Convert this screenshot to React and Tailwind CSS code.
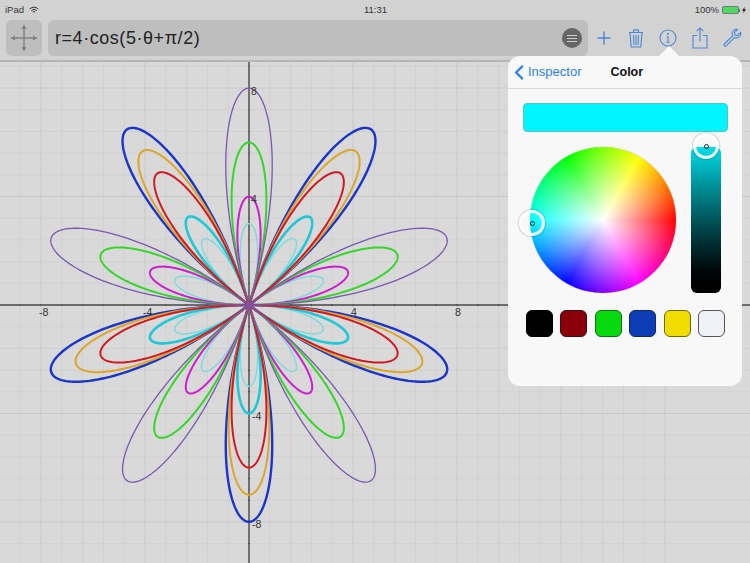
import React from 'react'

const OX = 249
const OY = 305
const SX = 26
const SY = 27.1

// r = a * sin(5t), positive a points the top petal up
const rose = (a) => {
    const pts = []
    for (let i = 0; i <= 720; i++) {
        const t = (i / 720) * Math.PI
        const r = a * Math.sin(5 * t)
        pts.push(`${(OX + r * Math.cos(t) * SX).toFixed(2)},${(OY - r * Math.sin(t) * SY).toFixed(2)}`)
    }
    return pts.join(' ')
}

const curves = [
    { a: 3, color: '#7fdadd', w: 1.5 },
    { a: -3, color: '#7fdadd', w: 1.5 },
    { a: -4, color: '#1fc8d6', w: 2.6 },
    { a: 4, color: '#cc1fcc', w: 2 },
    { a: 6, color: '#35d62a', w: 2 },
    { a: -8, color: '#1a35c8', w: 2.4 },
    { a: -7, color: '#dda52a', w: 2 },
    { a: -6, color: '#d01a22', w: 2 },
    { a: 8, color: '#7a58b0', w: 1.3 },
]

const steps = Array.from({ length: 41 }, (_, i) => i - 20)

const Graph = () => (
    <svg viewBox="0 62 750 501" className="block w-[750px] h-[501px]">
        {steps.map((k) => (
            <g key={k}>
                <line x1={OX + k * 20.8} x2={OX + k * 20.8} y1="62" y2="563" stroke={k % 5 === 0 ? '#c8c8c8' : '#d1d1d1'} strokeWidth="1" />
                <line x1="0" x2="750" y1={OY + k * 21.7} y2={OY + k * 21.7} stroke={k % 5 === 0 ? '#c8c8c8' : '#d1d1d1'} strokeWidth="1" />
                <line x1={OX + k * 20.8} x2={OX + k * 20.8} y1={OY - 1} y2={OY + 1} stroke="#444" strokeWidth="1" />
                <line x1={OX - 1} x2={OX + 1} y1={OY + k * 21.7} y2={OY + k * 21.7} stroke="#444" strokeWidth="1" />
            </g>
        ))}
        <line x1="0" x2="750" y1={OY} y2={OY} stroke="#4a4a4a" strokeWidth="1.3" />
        <line x1={OX} x2={OX} y1="62" y2="563" stroke="#4a4a4a" strokeWidth="1.4" />
        {curves.map((c) => (
            <polyline key={c.a} points={rose(c.a)} fill="none" stroke={c.color} strokeWidth={c.w} strokeLinejoin="round" />
        ))}
        <g fontFamily="'Liberation Sans', sans-serif" fontSize="10.5" fill="#333">
            <text x="39" y="316">-8</text>
            <text x="143" y="316">-4</text>
            <text x="351" y="316">4</text>
            <text x="455" y="316">8</text>
            <text x="251" y="95">8</text>
            <text x="251" y="203">4</text>
            <text x="252" y="420">-4</text>
            <text x="252" y="528">-8</text>
        </g>
    </svg>
)

const MoveIcon = () => (
    <svg viewBox="0 0 30 30" className="w-[30px] h-[30px]" fill="#808080" stroke="#808080">
        <line x1="15" y1="4" x2="15" y2="26" strokeWidth="1.4" />
        <line x1="4" y1="15" x2="26" y2="15" strokeWidth="1.4" />
        <path d="M15 1.5 L17.5 6 H12.5 Z M15 28.5 L17.5 24 H12.5 Z M1.5 15 L6 12.5 V17.5 Z M28.5 15 L24 12.5 V17.5 Z" stroke="none" />
    </svg>
)

const icon = 'w-6 h-6 fill-none stroke-[#4a88d4]'

const ToolIcons = () => (
    <div className="flex items-center gap-2 -ml-[2px]">
        <svg viewBox="0 0 24 24" className={icon} strokeWidth="1.4">
            <path d="M12 5.5V18.5M5.5 12H18.5" />
        </svg>
        <svg viewBox="0 0 24 24" className={icon} strokeWidth="1.1">
            <path d="M5 6.5H19M9.5 6V4.2Q12 3 14.5 4.2V6M6 7L7.2 21H16.8L18 7M9.5 9L9.9 19M12 9V19M14.5 9L14.1 19" />
        </svg>
        <svg viewBox="0 0 24 24" className={icon} strokeWidth="1.1">
            <circle cx="12" cy="12" r="8" />
            <path d="M12 10.5V16.5M10.6 16.5H13.4M10.8 10.5H12" />
            <circle cx="12" cy="7.8" r="0.5" fill="#4a88d4" />
        </svg>
        <svg viewBox="0 0 24 24" className={icon} strokeWidth="1.1">
            <path d="M9 9.5H5V22H19V9.5H15M12 15.5V2M8.7 5.2L12 2L15.3 5.2" />
        </svg>
        <svg viewBox="0 0 24 24" className={icon} strokeWidth="1.1">
            <path d="M20.5 6.5L17.4 9.6L15 9L14.4 6.6L17.5 3.5C14.5 2.8 11.8 5 12.2 8.4L12.6 9.8L4.4 18C3.3 19.2 4.8 21 6.2 19.9L14.4 11.6C18.2 12.7 21.7 10.2 20.5 6.5Z" />
        </svg>
    </div>
)

const Handle = ({ className }) => (
    <div className={`absolute w-[26px] h-[26px] rounded-full border-[3.5px] border-white/90 shadow-[0_0_2px_rgba(0,0,0,0.5)] flex items-center justify-center ${className}`}>
        <div className="w-[5px] h-[5px] rounded-full border border-[#123]"></div>
    </div>
)

const swatches = [
    'bg-black border-black',
    'bg-[#8a0008] border-[#3c1014]',
    'bg-[#06d90e] border-[#1c6a1e]',
    'bg-[#0c3db4] border-[#0f2a70]',
    'bg-[#f0dd00] border-[#6e6718]',
    'bg-[#f0f2f8] border-[#555]',
]

const Inspector = () => (
    <div className="absolute left-[508px] top-[56px] w-[234px] h-[330px] rounded-xl bg-[#f8f8f8]">
        <div className="absolute left-[154px] -top-[7px] w-[14px] h-[14px] rotate-45 bg-[#f8f8f8]"></div>
        <div className="relative flex items-center h-[33px] border-b border-[#d8d8d8]">
            <svg viewBox="0 0 12 18" className="ml-[5px] w-[12px] h-[17px] fill-none stroke-[#2f80ed]" strokeWidth="2.4">
                <path d="M10 2L3 9L10 16" />
            </svg>
            <span className="ml-[3px] text-[13px] text-[#2f80ed]">Inspector</span>
            <span className="ml-[29px] text-[12.5px] font-bold text-[#111]">Color</span>
        </div>
        <div className="mt-[14px] ml-[15px] w-[205px] h-[29px] rounded bg-[#00f5ff] border border-[#5cc0c8]"></div>
        <div className="relative flex mt-[15px] ml-[22px]">
            <div className="w-[146px] h-[146px] rounded-full shadow-[0_0_1px_rgba(80,80,40,0.7)] [background:radial-gradient(closest-side,#ffffff,#ffffff00),conic-gradient(from_90deg,#ff0000,#ff00ff_60deg,#0000ff_120deg,#00ffff_180deg,#00ff00_240deg,#ffff00_300deg,#ff0000)]"></div>
            <div className="ml-[15px] w-[30px] h-[146px] rounded-md bg-gradient-to-b from-[#00dde8] to-black"></div>
            <Handle className="-left-[11px] top-[63px]" />
            <Handle className="left-[163px] -top-[14px]" />
        </div>
        <div className="flex gap-[7.4px] mt-[17px] ml-[18px]">
            {swatches.map((s) => (
                <div key={s} className={`w-[27px] h-[27px] rounded-md border ${s}`}></div>
            ))}
        </div>
    </div>
)

const App = () => {
    return (
        <div className="relative flex flex-col w-[750px] h-[563px] overflow-hidden bg-[#d9d9d9] font-['Liberation_Sans',sans-serif] text-[#222]">
            {/* status bar */}
            <div className="flex items-center justify-between h-5 pl-[5px] pr-1 bg-[#d2d2d2] text-[9.5px] text-[#333]">
                <div className="flex items-center gap-[5px] w-[200px]">
                    <span>iPad</span>
                    <svg viewBox="0 0 14 10" className="w-[10px] h-[8px] fill-none stroke-[#333]" strokeWidth="1.4">
                        <path d="M1 3.5Q7 -1.5 13 3.5M3.2 5.7Q7 2.5 10.8 5.7M5.4 7.8Q7 6.6 8.6 7.8" />
                    </svg>
                </div>
                <span>11:31</span>
                <div className="flex items-center justify-end w-[200px]">
                    <span className="mr-[3px]">100%</span>
                    <div className="w-[17px] h-[8px] rounded-[2px] bg-[#4cd964] border border-[#777]"></div>
                    <div className="w-px h-[3px] bg-[#666] mr-[2px]"></div>
                    <svg viewBox="0 0 6 10" className="w-[4px] h-[8px] fill-[#222]">
                        <path d="M4 0L0 6H2.5L2 10L6 4H3.5Z" />
                    </svg>
                </div>
            </div>
            {/* toolbar */}
            <div className="flex items-start gap-[6px] h-[42px] pl-[6px] bg-[#d2d2d2] border-b-2 border-[#b4b4b4]">
                <div className="flex items-center justify-center w-9 h-9 rounded-md bg-[#bebebe]">
                    <MoveIcon />
                </div>
                <div className="flex items-center justify-between w-[540px] h-9 pl-[7px] pr-[6px] rounded-md bg-[#bebebe]">
                    <span className="text-[18px] tracking-[0.55px] text-[#222]">r=4·cos(5·θ+π/2)</span>
                    <div className="flex flex-col items-center justify-center gap-[2px] w-5 h-5 rounded-full bg-[#666]">
                        <div className="w-[10px] h-px bg-[#ccc]"></div>
                        <div className="w-[10px] h-px bg-[#ccc]"></div>
                        <div className="w-[10px] h-px bg-[#ccc]"></div>
                    </div>
                </div>
                <div className="self-center -mt-1">
                    <ToolIcons />
                </div>
            </div>
            <Graph />
            <Inspector />
        </div>
    )
}

export default App
